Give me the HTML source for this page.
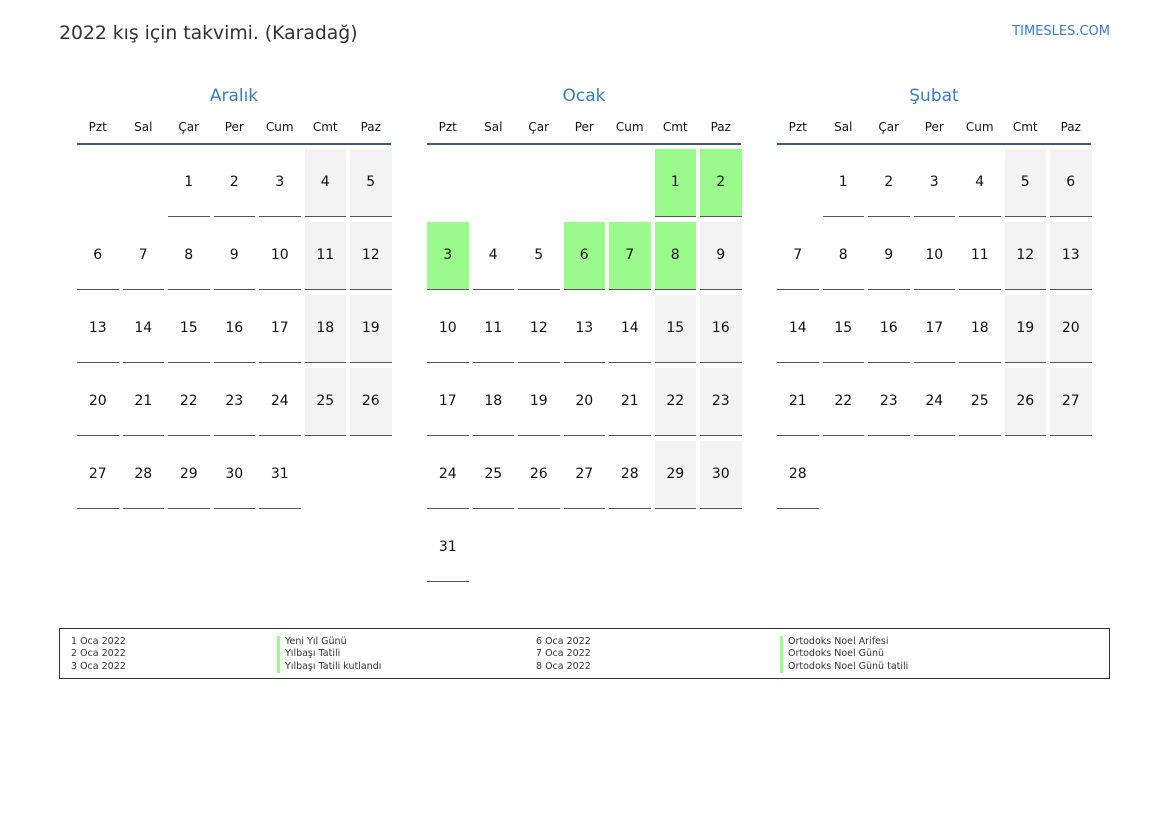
<!DOCTYPE html><html><head><meta charset="utf-8"><style>
body{margin:0;width:1169px;height:827px;background:#fff;font-family:"DejaVu Sans","Liberation Sans",sans-serif;position:relative;overflow:hidden;color:#111}
.t{position:absolute;left:59px;top:23px;font-size:18.8px;color:#333}
.s{position:absolute;right:59px;top:24px;font-size:13px;color:#3a7cc4}
.m{position:absolute;top:86px;width:314px}
.mt{text-align:center;font-size:17px;color:#3a7cc4;height:22px}
.dn{display:grid;grid-template-columns:repeat(7,41.5px);column-gap:4px;font-size:12px;text-align:center;margin-top:12px;height:23px;border-bottom:2px solid #3d5a7a;margin-left:0}
.g{display:grid;grid-template-columns:repeat(7,41.5px);column-gap:4px;row-gap:5px;margin-top:4px}
.g div{height:67px;line-height:67px;text-align:center;font-size:14px}
.g .d{border-bottom:1.5px solid #555}
.g .w{background:#f3f3f3}
.g .h{background:#9afa8b}
.lg{position:absolute;left:59px;top:628px;width:1049px;height:49px;border:1.5px solid #333;font-size:9.5px;color:#333}
.lg div{position:absolute;line-height:12.3px}
.b{border-left:3px solid #9afa8b;padding-left:5px}
</style></head><body>
<div class="t">2022 kış için takvimi. (Karadağ)</div>
<div class="s">TIMESLES.COM</div>

<div class="m" style="left:77px"><div class="mt">Aralık</div>
<div class="dn"><span>Pzt</span><span>Sal</span><span>Çar</span><span>Per</span><span>Cum</span><span>Cmt</span><span>Paz</span></div>
<div class="g">
<div></div><div></div><div class="d">1</div><div class="d">2</div><div class="d">3</div><div class="d w">4</div><div class="d w">5</div>
<div class="d">6</div><div class="d">7</div><div class="d">8</div><div class="d">9</div><div class="d">10</div><div class="d w">11</div><div class="d w">12</div>
<div class="d">13</div><div class="d">14</div><div class="d">15</div><div class="d">16</div><div class="d">17</div><div class="d w">18</div><div class="d w">19</div>
<div class="d">20</div><div class="d">21</div><div class="d">22</div><div class="d">23</div><div class="d">24</div><div class="d w">25</div><div class="d w">26</div>
<div class="d">27</div><div class="d">28</div><div class="d">29</div><div class="d">30</div><div class="d">31</div>
</div></div>

<div class="m" style="left:427px"><div class="mt">Ocak</div>
<div class="dn"><span>Pzt</span><span>Sal</span><span>Çar</span><span>Per</span><span>Cum</span><span>Cmt</span><span>Paz</span></div>
<div class="g">
<div></div><div></div><div></div><div></div><div></div><div class="d h">1</div><div class="d h">2</div>
<div class="d h">3</div><div class="d">4</div><div class="d">5</div><div class="d h">6</div><div class="d h">7</div><div class="d h">8</div><div class="d w">9</div>
<div class="d">10</div><div class="d">11</div><div class="d">12</div><div class="d">13</div><div class="d">14</div><div class="d w">15</div><div class="d w">16</div>
<div class="d">17</div><div class="d">18</div><div class="d">19</div><div class="d">20</div><div class="d">21</div><div class="d w">22</div><div class="d w">23</div>
<div class="d">24</div><div class="d">25</div><div class="d">26</div><div class="d">27</div><div class="d">28</div><div class="d w">29</div><div class="d w">30</div>
<div class="d">31</div>
</div></div>

<div class="m" style="left:777px"><div class="mt">Şubat</div>
<div class="dn"><span>Pzt</span><span>Sal</span><span>Çar</span><span>Per</span><span>Cum</span><span>Cmt</span><span>Paz</span></div>
<div class="g">
<div></div><div class="d">1</div><div class="d">2</div><div class="d">3</div><div class="d">4</div><div class="d w">5</div><div class="d w">6</div>
<div class="d">7</div><div class="d">8</div><div class="d">9</div><div class="d">10</div><div class="d">11</div><div class="d w">12</div><div class="d w">13</div>
<div class="d">14</div><div class="d">15</div><div class="d">16</div><div class="d">17</div><div class="d">18</div><div class="d w">19</div><div class="d w">20</div>
<div class="d">21</div><div class="d">22</div><div class="d">23</div><div class="d">24</div><div class="d">25</div><div class="d w">26</div><div class="d w">27</div>
<div class="d">28</div>
</div></div>

<div class="lg">
<div style="left:11px;top:7px">1 Oca 2022<br>2 Oca 2022<br>3 Oca 2022</div>
<div style="left:217px;top:7px" class="b">Yeni Yıl Günü<br>Yılbaşı Tatili<br>Yılbaşı Tatili kutlandı</div>
<div style="left:476px;top:7px">6 Oca 2022<br>7 Oca 2022<br>8 Oca 2022</div>
<div style="left:720px;top:7px" class="b">Ortodoks Noel Arifesi<br>Ortodoks Noel Günü<br>Ortodoks Noel Günü tatili</div>
</div>
</body></html>
